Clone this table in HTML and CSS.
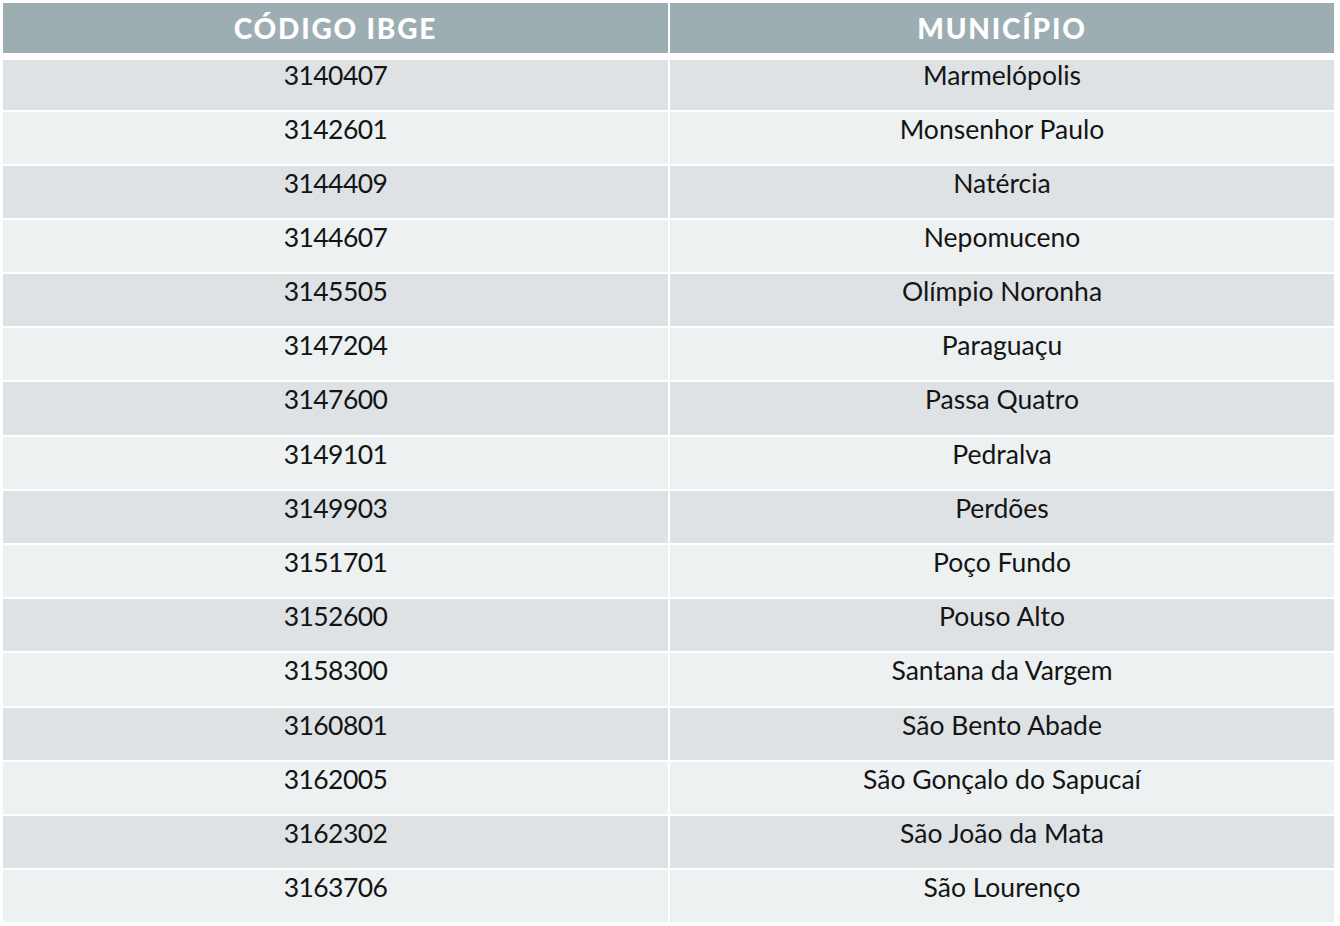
FILE: index.html
```html
<!DOCTYPE html>
<html lang="pt">
<head>
<meta charset="utf-8">
<title>Municípios</title>
<link rel="stylesheet" href="styles.css">
</head>
<body>
<div class="table">
  <div class="row head">
    <div class="cell">CÓDIGO IBGE</div>
    <div class="cell">MUNICÍPIO</div>
  </div>
  <div class="row odd first"><div class="cell code">3140407</div><div class="cell">Marmelópolis</div></div>
  <div class="row even"><div class="cell code">3142601</div><div class="cell">Monsenhor Paulo</div></div>
  <div class="row odd"><div class="cell code">3144409</div><div class="cell">Natércia</div></div>
  <div class="row even"><div class="cell code">3144607</div><div class="cell">Nepomuceno</div></div>
  <div class="row odd"><div class="cell code">3145505</div><div class="cell">Olímpio Noronha</div></div>
  <div class="row even"><div class="cell code">3147204</div><div class="cell">Paraguaçu</div></div>
  <div class="row odd"><div class="cell code">3147600</div><div class="cell">Passa Quatro</div></div>
  <div class="row even"><div class="cell code">3149101</div><div class="cell">Pedralva</div></div>
  <div class="row odd"><div class="cell code">3149903</div><div class="cell">Perdões</div></div>
  <div class="row even"><div class="cell code">3151701</div><div class="cell">Poço Fundo</div></div>
  <div class="row odd"><div class="cell code">3152600</div><div class="cell">Pouso Alto</div></div>
  <div class="row even"><div class="cell code">3158300</div><div class="cell">Santana da Vargem</div></div>
  <div class="row odd"><div class="cell code">3160801</div><div class="cell">São Bento Abade</div></div>
  <div class="row even"><div class="cell code">3162005</div><div class="cell">São Gonçalo do Sapucaí</div></div>
  <div class="row odd"><div class="cell code">3162302</div><div class="cell">São João da Mata</div></div>
  <div class="row even"><div class="cell code">3163706</div><div class="cell">São Lourenço</div></div>
</div>
</body>
</html>
```
FILE: styles.css
```css
html, body {
  margin: 0;
  padding: 0;
  background: #ffffff;
}
body {
  font-family: "Lato", "Liberation Sans", sans-serif;
  color: #141414;
}
.table {
  display: flex;
  flex-direction: column;
  gap: 2px;
  padding: 3px 0 0 3px;
  width: 1331px;
}
.row {
  display: grid;
  grid-template-columns: 665px 664px;
  column-gap: 2px;
  height: 52.2px;
}
.cell {
  text-align: center;
  font-size: 26.5px;
  line-height: 30px;
  padding-top: 2px;
}
.code {
  letter-spacing: -0.6px;
}
.head {
  height: 50px;
  margin-bottom: 5px;
}
.head .cell {
  background: #9daeb3;
  color: #ffffff;
  font-weight: 900;
  font-size: 28px;
  line-height: 50px;
  padding-top: 0;
  letter-spacing: 1.8px;
}
.first {
  height: 49.5px;
}
.first .cell {
  padding-top: 0;
}
.odd .cell {
  background: #dee2e4;
}
.even .cell {
  background: #edf1f2;
}
```
